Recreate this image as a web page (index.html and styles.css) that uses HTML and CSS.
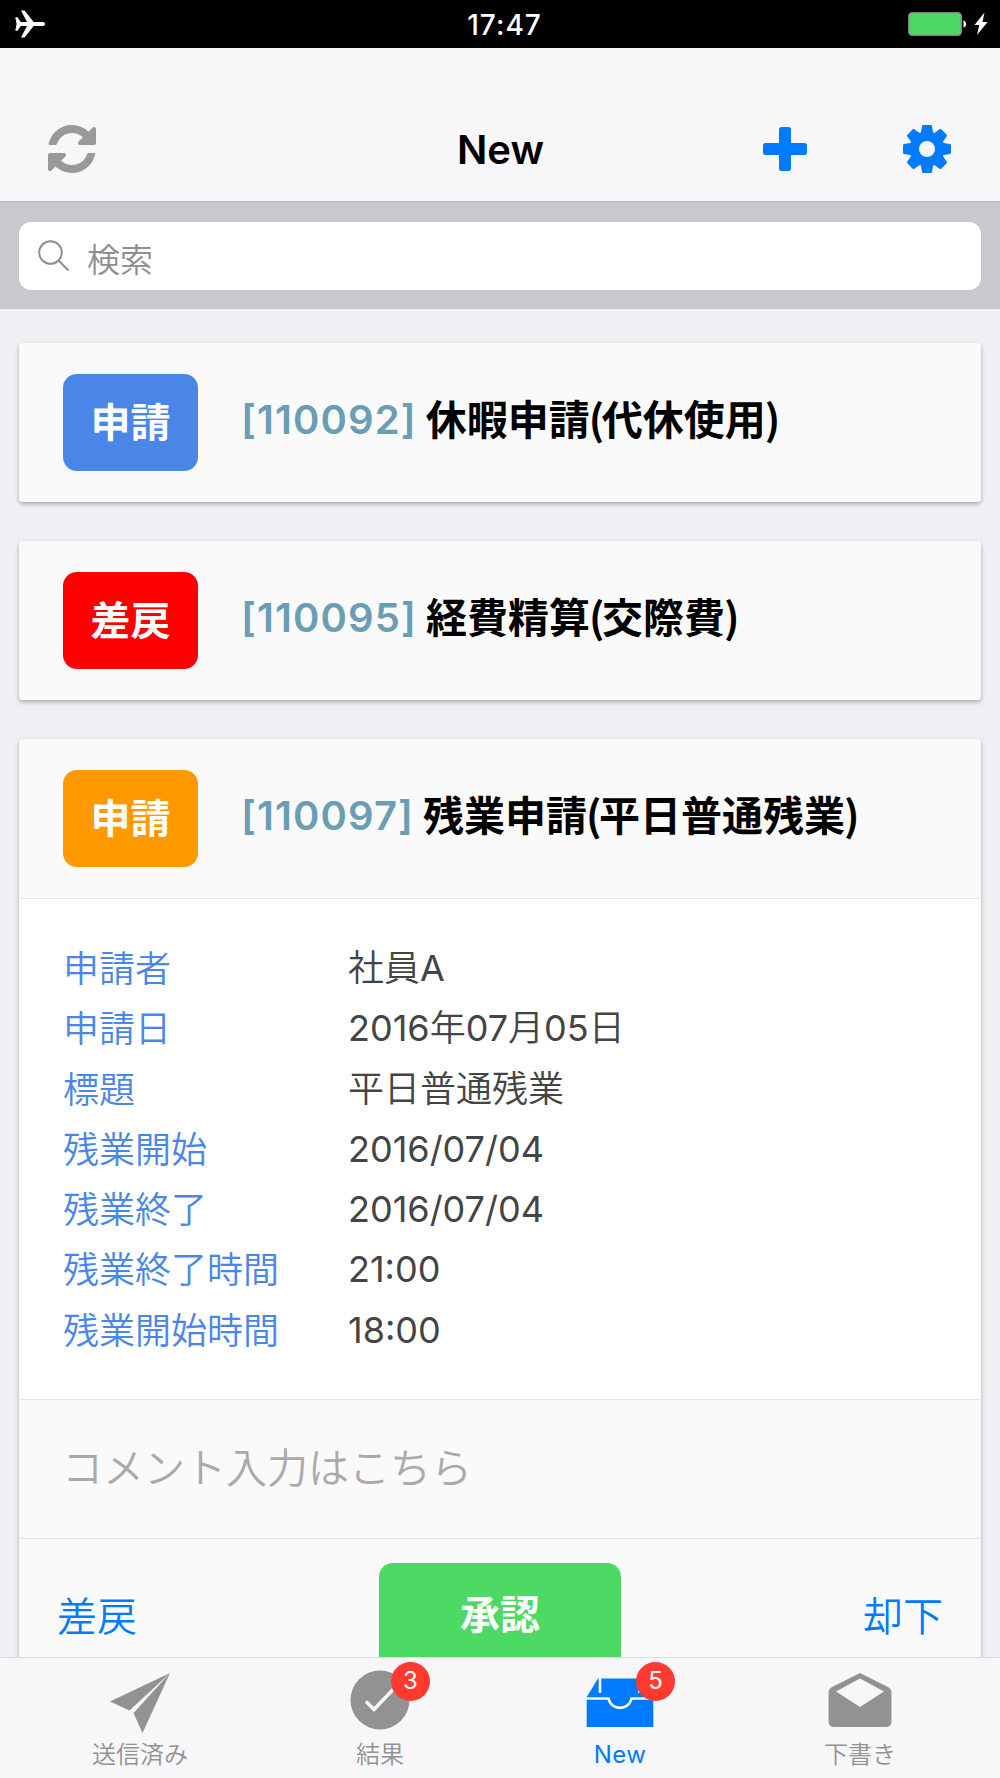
FILE: index.html
```html
<!DOCTYPE html>
<html lang="ja">
<head>
<meta charset="utf-8">
<title>New</title>
<link rel="stylesheet" href="styles.css">
</head>
<body>
<div class="app">
  <div class="status">
    <svg class="status-plane" viewBox="0 0 30 28" width="30" height="28"><path d="M.3 7.3h2.200l3.300 4.600H12L6 .6h3.600L18.600 12H28a2 2 0 0 1 0 4h-9.400L9.600 27.400H6L12 16.100H5.800L2.500 20.700H.3L1.600 14z"/></svg>
    <span class="status-time">17:47</span>
    <div class="status-power">
      <svg viewBox="0 0 82 24" width="82" height="24">
        <rect x=".7" y=".7" width="52.600" height="22.600" rx="3.500" fill="#4cd964" stroke="#7d8a80" stroke-width="1.400"/>
        <path d="M55.500 8.500c3.600 1 3.600 6 0 7z" fill="#fff"/>
        <path d="M76.500.5 66.500 13h4.800l-2.300 10L79.600 10h-5.100z" fill="#fff"/>
      </svg>
    </div>
  </div>

  <header class="navbar">
    <svg class="nav-refresh" viewBox="0 0 1536 1536" width="48" height="48"><path d="M1511 928q0 5-1 7-64 268-268 434.500T764 1536q-146 0-282.500-55T238 1324l-129 129q-19 19-45 19t-45-19-19-45V960q0-26 19-45t45-19h448q26 0 45 19t19 45-19 45l-137 137q71 66 161 102t187 36q134 0 250-65t186-179q11-17 53-117 8-23 30-23h192q13 0 22.500 9.500t9.500 22.500zm25-800v448q0 26-19 45t-45 19h-448q-26 0-45-19t-19-45 19-45l138-138Q969 256 768 256q-134 0-250 65T332 500q-11 17-53 117-8 23-30 23H50q-13 0-22.500-9.500T18 608v-7q65-268 270-434.500T768 0q146 0 284 55.500T1297 212l130-129q19-19 45-19t45 19 19 45z"/></svg>
    <h1 class="nav-title">New</h1>
    <div class="nav-actions">
      <svg viewBox="0 0 44 44" width="44" height="44"><rect x="16" width="12" height="44" rx="2.500"/><rect y="16" width="44" height="12" rx="2.500"/></svg>
      <svg viewBox="-24 -24 48 48" width="48" height="48">
        <defs><path id="tooth" d="M-6.500-14-5-22.800Q-4.800-24-3.800-24H3.800Q4.800-24 5-22.800L6.500-14z"/></defs>
        <path fill-rule="evenodd" d="M0-17.500a17.500 17.500 0 1 1 0 35 17.500 17.500 0 1 1 0-35zM0-8a8 8 0 1 0 0 16A8 8 0 1 0 0-8z"/>
        <use href="#tooth"/><use href="#tooth" transform="rotate(45)"/><use href="#tooth" transform="rotate(90)"/><use href="#tooth" transform="rotate(135)"/><use href="#tooth" transform="rotate(180)"/><use href="#tooth" transform="rotate(225)"/><use href="#tooth" transform="rotate(270)"/><use href="#tooth" transform="rotate(315)"/>
      </svg>
    </div>
  </header>

  <div class="search">
    <div class="search-box">
      <svg viewBox="0 0 32 32" width="32" height="32"><circle cx="12.500" cy="12.500" r="11.300"/><path d="m20.500 20.500 10 10"/></svg>
      <span>検索</span>
    </div>
  </div>

  <main class="list">
    <section class="card">
      <div class="card-head">
        <span class="tag tag-blue">申請</span>
        <h2 class="card-title"><span class="num">[110092]</span><span class="name">休暇申請<span class="paren">(</span>代休使用<span class="paren">)</span></span></h2>
      </div>
    </section>
    <section class="card">
      <div class="card-head">
        <span class="tag tag-red">差戻</span>
        <h2 class="card-title"><span class="num">[110095]</span><span class="name">経費精算<span class="paren">(</span>交際費<span class="paren">)</span></span></h2>
      </div>
    </section>
    <section class="card">
      <div class="card-head">
        <span class="tag tag-orange">申請</span>
        <h2 class="card-title"><span class="num">[110097]</span><span class="name">残業申請<span class="paren">(</span>平日普通残業<span class="paren">)</span></span></h2>
      </div>
      <dl class="details">
        <dt>申請者</dt><dd>社員<span class="latin">A</span></dd>
        <dt>申請日</dt><dd><span class="latin">2016</span>年<span class="latin">07</span>月<span class="latin">05</span>日</dd>
        <dt>標題</dt><dd>平日普通残業</dd>
        <dt>残業開始</dt><dd><span class="latin">2016/07/04</span></dd>
        <dt>残業終了</dt><dd><span class="latin">2016/07/04</span></dd>
        <dt>残業終了時間</dt><dd><span class="latin">21:00</span></dd>
        <dt>残業開始時間</dt><dd><span class="latin">18:00</span></dd>
      </dl>
      <div class="comment">コメント入力はこちら</div>
      <div class="actions">
        <span class="link">差戻</span>
        <span class="approve">承認</span>
        <span class="link">却下</span>
      </div>
    </section>
  </main>

  <nav class="tabs">
    <div class="tab">
      <div class="tab-icon"><svg viewBox="0 0 60 60" width="60" height="60"><path d="M60 0 0 28.500l19.500 9z"/><path d="M60 0 23.500 40 32.500 60z"/></svg></div>
      <span>送信済み</span>
    </div>
    <div class="tab">
      <div class="tab-icon"><svg viewBox="0 0 60 60" width="60" height="60"><circle cx="30" cy="27" r="29.500"/><path class="cut" d="m16 28.500 8 8L43 16.500" stroke-width="3.500"/></svg><b class="count">3</b></div>
      <span>結果</span>
    </div>
    <div class="tab tab-active">
      <div class="tab-icon"><svg viewBox="0 0 68 60" width="68" height="60"><path d="M12 5.500h44l11.300 18.500v30H.7V24z"/><path class="cut" d="M0 25.500h22.500c2.500 12.500 20.500 12.500 23 0H68" stroke-width="2.600"/><path class="cut" d="M14 5v15M53.500 5v15" stroke-width="2.600"/></svg><b class="count">5</b></div>
      <span>New</span>
    </div>
    <div class="tab">
      <div class="tab-icon"><svg viewBox="0 0 64 60" width="64" height="60"><path fill-rule="evenodd" d="M32 0 60 14q3.500 2 3.500 6v28q0 6-6 6h-51q-6 0-6-6V20q0-4 3.500-6zM8 18.500 32 34 56 18.500 32 5.500z"/></svg></div>
      <span>下書き</span>
    </div>
  </nav>
</div>
</body>
</html>
```
FILE: styles.css
```css
* { box-sizing: border-box; }

body {
  margin: 0;
  background: #efeff4;
  font-family: Inter, "Noto Sans CJK JP", sans-serif;
}

.app {
  display: flex;
  flex-direction: column;
  width: 1000px;
  height: 1778px;
  overflow: hidden;
}

.status {
  display: grid;
  grid-template-columns: 1fr auto 1fr;
  align-items: center;
  height: 48px;
  padding: 0 10px 0 15px;
  background: #000;
  color: #fff;
}
.status-plane { fill: #fff; margin-bottom: 1px; }
.status-time { padding: 2px 0 0 4px; font-size: 28px; font-weight: 500; line-height: 46px; letter-spacing: 1px; }
.status-power { display: flex; justify-content: flex-end; }

.navbar {
  display: grid;
  grid-template-columns: 1fr auto 1fr;
  align-items: center;
  height: 154px;
  padding: 48px 49px 0 48px;
  background: #f7f7fa;
  border-bottom: 1px solid #b9b9bd;
}
.nav-refresh { fill: #999; }
.nav-title { margin: 0; padding: 2px 0 0 2px; font-size: 40px; font-weight: 600; line-height: 48px; }
.nav-actions { display: flex; align-items: center; justify-content: flex-end; gap: 96px; fill: #007aff; }

.search { height: 107px; padding: 20px 19px 0; background: #c9c8ce; }
.search-box {
  display: flex;
  align-items: center;
  gap: 17px;
  height: 68px;
  padding: 0 19px;
  border-radius: 12px;
  background: #fff;
  color: #8e8e93;
  font-size: 33px;
}
.search-box svg { fill: none; stroke: #8e8e93; stroke-width: 2; }
.search-box span { padding-top: 8px; line-height: 48px; font-weight: 350; }

.list {
  display: flex;
  flex-direction: column;
  flex: 1;
  gap: 39px;
  min-height: 0;
  padding: 34px 19px 0;
  overflow: hidden;
}
.card {
  flex: none;
  border-radius: 4px;
  background: #fff;
  box-shadow: 0 2px 4px rgba(0, 0, 0, 0.3);
}
.card-head {
  display: flex;
  align-items: center;
  gap: 43px;
  height: 159px;
  padding: 0 44px;
  border-radius: 4px;
  background: #fafafa;
}
.tag {
  flex: none;
  width: 135px;
  height: 97px;
  border-radius: 14px;
  color: #fff;
  font-size: 40px;
  font-weight: 700;
  line-height: 97px;
  text-align: center;
}
.tag-blue { background: #4a86e8; }
.tag-red { background: #f00; }
.tag-orange { background: #f90; }
.card-title { display: flex; gap: 9px; margin: -8px 0 0; font-size: 41px; line-height: 60px; white-space: nowrap; }
.num { padding-top: 3px; color: #6a9eb4; font-size: 40px; font-weight: 600; letter-spacing: 1.1px; }
.name { color: #000; font-family: "Noto Sans CJK JP", sans-serif; font-weight: 700; }
.paren { margin-left: -1px; letter-spacing: -2.5px; }

.details {
  display: grid;
  grid-template-columns: 285px 1fr;
  grid-auto-rows: 60.3px;
  margin: 0;
  height: 501px;
  padding: 40px 44px;
  border-top: 1px solid #e6e6e6;
  font-size: 36px;
  font-weight: 350;
  line-height: 60px;
}
.details dt { color: #4a86e8; }
.details dd { margin: -1px 0 0; color: #444; }
.latin { font-weight: 400; }

.comment {
  height: 139px;
  padding: 0 43px;
  border-top: 1px solid #e6e6e6;
  background: #fafafa;
  color: #aaa;
  font-size: 41px;
  font-weight: 350;
  line-height: 137px;
}
.actions {
  display: flex;
  justify-content: space-between;
  height: 160px;
  padding: 24px 38px 22px;
  border-top: 1px solid #e6e6e6;
  background: #fafafa;
  font-size: 40px;
  line-height: 103px;
}
.link { padding-top: 2px; color: #007aff; font-weight: 350; }
.approve { width: 242px; border-radius: 14px; background: #4cd964; color: #fff; font-weight: 700; text-align: center; }

.tabs {
  display: grid;
  grid-template-columns: repeat(4, 1fr);
  height: 121px;
  padding: 0 20px;
  background: #f7f7fa;
  border-top: 1px solid #dcdce0;
}
.tab { display: flex; flex-direction: column; align-items: center; padding-top: 15px; color: #929292; font-size: 24px; font-weight: 350; line-height: 36px; }
.tab-icon { position: relative; height: 60px; margin-bottom: 4px; fill: #929292; }
.tab-icon svg { display: block; overflow: visible; }
.tab-active { color: #007aff; font-weight: 400; letter-spacing: 0.4px; }
.tab-active .tab-icon { fill: #007aff; }
.cut { fill: none; stroke: #f7f7fa; stroke-linecap: butt; }
.count {
  position: absolute;
  top: -11px;
  left: 41px;
  width: 39px;
  height: 39px;
  border-radius: 50%;
  background: #ff3b30;
  color: #fff;
  font-size: 24px;
  font-weight: 400;
  line-height: 38px;
  letter-spacing: 0;
  text-align: center;
}
.tab-active .count { left: 50px; }
```
